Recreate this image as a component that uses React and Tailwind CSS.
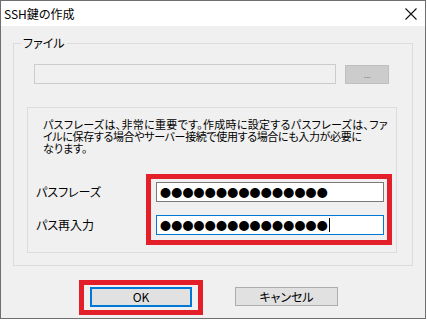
import React from 'react';

const Dots = ({ count }) => <span>{'●'.repeat(count)}</span>;

const App = () => {
    return (
        <div className="w-[426px] h-[319px] border border-[#6f6f6f] bg-[#f0f0f0] flex flex-col font-['Noto_Sans_CJK_JP',sans-serif] text-[#000] [font-feature-settings:'palt']">
            {/* title bar */}
            <div className="h-[25px] bg-white flex items-center justify-between pl-[3px] pr-[8px]">
                <span className="text-[12px] leading-none">SSH鍵の作成</span>
                <svg width="12" height="12" viewBox="0 0 12 12" className="mt-[1px]">
                    <path d="M0.5 0.5 L11.5 11.5 M11.5 0.5 L0.5 11.5" stroke="#111" strokeWidth="1.1" fill="none" />
                </svg>
            </div>

            <div className="px-[12px]">
                <fieldset className="mt-[9px] border border-[#dcdcdc] pl-[13px] pr-[15px] pt-[13px] pb-[12px]">
                    <legend className="ml-[-6px] px-[2px] text-[12px] leading-[16px]">ファイル</legend>

                    <div className="flex items-start ml-[7px]">
                        <div className="w-[302px] h-[20px] border border-[#cccccc] bg-[#f0f0f0]" />
                        <div className="ml-[9px] mt-[1px] w-[44px] h-[19px] bg-[#cccccc] border border-[#bfbfbf] flex items-center justify-center text-[8px] text-[#6d6d6d] leading-none">
                            ...
                        </div>
                    </div>

                    <div className="mt-[23px] h-[146px] border border-[#dcdcdc]">
                        {/* description */}
                        <div className="pl-[15px] pt-[10px] text-[11px] leading-[12px] whitespace-nowrap">
                            <p className="tracking-[0.3px]">パスフレーズは、非常に重要です。作成時に設定するパスフレーズは、ファ</p>
                            <p className="tracking-[-0.35px]">イルに保存する場合やサーバー接続で使用する場合にも入力が必要に</p>
                            <p>なります。</p>
                        </div>

                        <div className="flex mt-[20px]">
                            <div className="w-[118px] pl-[8px] pt-[8px] flex flex-col gap-[13px] text-[12px]">
                                <div className="h-[20px] flex items-center">パスフレーズ</div>
                                <div className="h-[20px] flex items-center">パス再入力</div>
                            </div>
                            <div className="border-[5px] border-[#e3202a] pl-[5px] pt-[3px] pr-[3px] pb-[5px] flex flex-col gap-[13px]">
                                <div className="w-[228px] h-[20px] border border-[#7a7a7a] bg-white flex items-center pl-[3px] text-[11px] leading-none tracking-[0.2px]">
                                    <Dots count={15} />
                                </div>
                                <div className="w-[228px] h-[20px] border border-[#0078d7] bg-white flex items-center pl-[3px] text-[11px] leading-none tracking-[0.2px]">
                                    <Dots count={15} />
                                    <span className="w-[1px] h-[14px] bg-black ml-[1px]" />
                                </div>
                            </div>
                        </div>
                    </div>
                </fieldset>
            </div>

            <div className="flex items-start mt-[14px] pl-[78px]">
                <div className="border-[5px] border-[#e3202a] px-[6px] pt-[2px] pb-[3px]">
                    <button className="w-[102px] h-[20px] border-2 border-[#0078d7] bg-[#e1e1e1] text-[12px] leading-none flex items-center justify-center">
                        OK
                    </button>
                </div>
                <button className="ml-[32px] mt-[7px] w-[103px] h-[19px] border border-[#adadad] bg-[#e1e1e1] text-[12px] leading-none flex items-center justify-center">
                    キャンセル
                </button>
            </div>
        </div>
    );
};

export default App;
